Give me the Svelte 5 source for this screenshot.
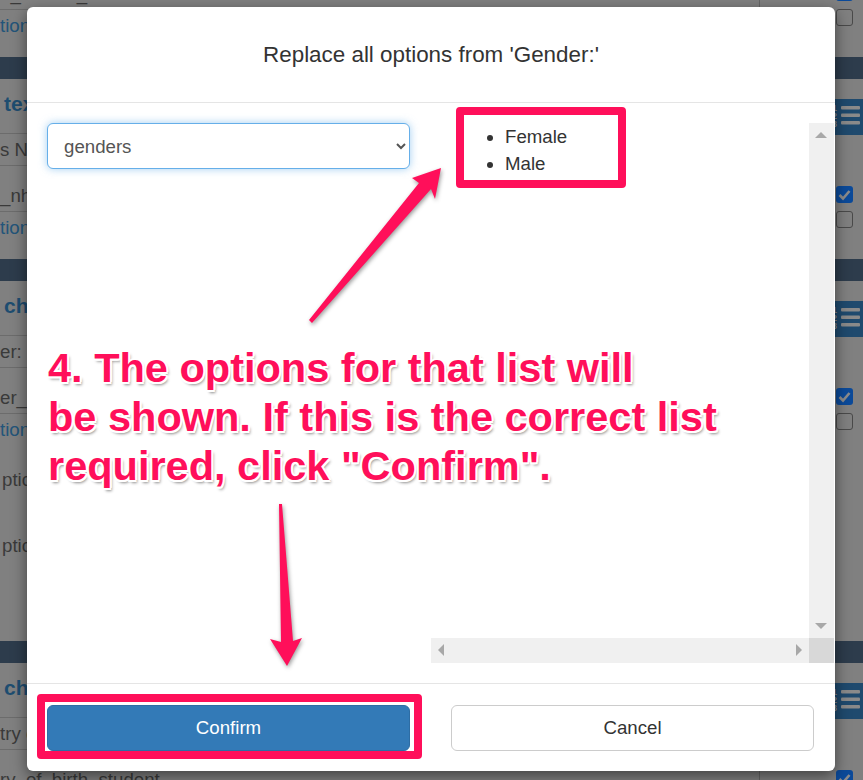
<script lang="ts">
	const sections = [
		{ title: '', label: '', input: 'e_names_student', link: 'tion', extra: [], height: 202 },
		{ title: 'tex', label: 's N', input: '_nh', link: 'tion', extra: [], height: 202 },
		{ title: 'ch', label: 'er:', input: 'er_s', link: 'tion', extra: ['ptic', 'ptic'], height: 382 },
		{ title: 'ch', label: 'try c', input: 'ry_of_birth_student', link: '', extra: [], height: 202 }
	];
	const options = ['Female', 'Male'];
	const note = ['4. The options for that list will', 'be shown. If this is the correct list', 'required, click "Confirm".'];
</script>

<div class="page">
	{#each sections as s}
		<section class="section" style="height: {s.height}px">
			<div class="band"></div>
			<div class="cols">
				<div class="fields">
					<div class="title">{s.title}</div>
					<div class="row">{s.label}</div>
					<div class="row input">{s.input}</div>
					<div class="link">{s.link}</div>
					{#each s.extra as e}
						<div class="extra">{e}</div>
					{/each}
				</div>
				<div class="tools">
					<div class="list-btn">
						<svg width="28" height="36" viewBox="0 0 28 36">
							<text x="-3" y="12" class="num">1</text>
							<text x="-3" y="20" class="num">2</text>
							<text x="-3" y="28" class="num">3</text>
							<rect x="6" y="7" width="19" height="3.4" rx="1" />
							<rect x="6" y="14.5" width="19" height="3.4" rx="1" />
							<rect x="6" y="22" width="19" height="3.4" rx="1" />
						</svg>
					</div>
					<div class="check on">
						<svg width="17" height="17" viewBox="0 0 17 17"><path d="M3.5 9l3.5 3.5 6.5-7.5" /></svg>
					</div>
					<div class="check"></div>
				</div>
			</div>
		</section>
	{/each}
</div>

<div class="modal">
	<header class="head">
		<h4>Replace all options from 'Gender:'</h4>
	</header>
	<div class="body">
		<select class="picker">
			<option>genders</option>
		</select>
		<div class="pane">
			<div class="pane-content">
				<ul>
					{#each options as o}
						<li>{o}</li>
					{/each}
				</ul>
			</div>
			<div class="track vtrack">
				<span class="arrow up"></span>
				<span class="arrow down"></span>
			</div>
			<div class="track htrack">
				<span class="arrow left"></span>
				<span class="arrow right"></span>
			</div>
			<div class="corner"></div>
		</div>
	</div>
	<footer class="foot">
		<button class="btn primary">Confirm</button>
		<button class="btn">Cancel</button>
	</footer>
</div>

<!-- annotations drawn over the screenshot -->
<div class="mark mark-list"></div>
<div class="mark mark-confirm"></div>
<svg class="arrows" width="863" height="780" viewBox="0 0 863 780">
	<polygon points="309,320 419,183 412,178 441,168 435,199 431,189 312,323" />
	<polygon points="279,504 282,504 293,641 302,638 287,666 270,639 281,642" />
</svg>
<div class="note">
	{#each note as line}
		<div>{line}</div>
	{/each}
</div>

<style>
	:global(body) {
		margin: 0;
		width: 863px;
		height: 780px;
		overflow: hidden;
		background: #808080;
		font-family: 'Liberation Sans', Arial, sans-serif;
	}

	.page {
		margin-top: -145px;
		color: #3a3a3a;
		font-size: 18.67px;
	}

	.section {
		overflow: hidden;
	}

	.band {
		height: 22px;
		background: #2d3c4c;
	}

	.cols {
		display: flex;
	}

	.fields {
		width: 760px;
		border-right: 1px solid #666;
		white-space: nowrap;
		box-sizing: border-box;
		height: 600px;
		margin-right: 75px;
	}

	.title {
		height: 55px;
		box-sizing: border-box;
		padding: 13px 0 0 4px;
		border-bottom: 1px solid #6c6c6c;
		font-size: 21px;
		font-weight: bold;
		color: #1e4d70;
	}

	.row {
		height: 31px;
		line-height: 31px;
		border-bottom: 1px solid #6c6c6c;
	}

	.input {
		margin-top: 14px;
	}

	.link {
		height: 44px;
		line-height: 31px;
		color: #23557a;
	}

	.extra {
		height: 66px;
		line-height: 31px;
		padding-left: 2px;
		position: relative;
		top: 6px;
	}

	.tools {
		width: 28px;
		display: flex;
		flex-direction: column;
	}

	.list-btn {
		height: 36px;
		margin-top: 20px;
		background: #1f4a6e;
		overflow: hidden;
	}

	.list-btn svg {
		display: block;
		fill: #8a8a8a;
	}

	.num {
		font-size: 9px;
		font-weight: bold;
		fill: #8a8a8a;
	}

	.check {
		width: 17px;
		height: 17px;
		margin: 8px 0 0 1px;
		box-sizing: border-box;
		border: 1.5px solid #4a4a4a;
		border-radius: 3px;
	}

	.check.on {
		margin-top: 51px;
		background: #0b4a9a;
		border: none;
	}

	.check svg {
		display: block;
		fill: none;
		stroke: #8c8c8c;
		stroke-width: 2.6;
	}

	.modal {
		position: absolute;
		left: 27px;
		top: 7px;
		width: 808px;
		height: 764px;
		display: flex;
		flex-direction: column;
		background: #fff;
		border-radius: 6px;
		box-shadow: 0 5px 15px rgba(0, 0, 0, 0.5);
		color: #333;
	}

	.head {
		height: 96px;
		box-sizing: border-box;
		border-bottom: 1px solid #e5e5e5;
		text-align: center;
	}

	h4 {
		margin: 0;
		padding-top: 34px;
		font-size: 22.4px;
		line-height: 28px;
		font-weight: normal;
	}

	.body {
		flex: 1;
		min-height: 0;
		display: grid;
		grid-template-columns: 363px 403px;
		column-gap: 21px;
		padding: 20px 1px 20px 20px;
	}

	.picker {
		height: 46px;
		padding: 6px 12px;
		font: inherit;
		font-size: 18.67px;
		color: #555;
		background-color: #fff;
		border: 1px solid #66afe9;
		border-radius: 6px;
		box-shadow: 0 0 8px rgba(102, 175, 233, 0.6);
		outline: none;
	}

	.pane {
		display: grid;
		grid-template-columns: 1fr 25px;
		grid-template-rows: 1fr 25px;
		min-height: 0;
	}

	.pane-content {
		min-width: 0;
	}

	ul {
		margin: 0;
		padding: 0 0 0 74px;
		font-size: 18.67px;
		line-height: 27px;
	}

	.track {
		position: relative;
		background: #f0f0f0;
	}

	.corner {
		background: #d8d8d8;
	}

	.arrow {
		position: absolute;
		width: 0;
		height: 0;
		border: 6px solid transparent;
	}

	.up {
		top: 0;
		left: 6px;
		border-top: 0;
		border-bottom-color: #a8a8a8;
		margin-top: 9px;
	}

	.down {
		bottom: 9px;
		left: 6px;
		border-bottom: 0;
		border-top-color: #a8a8a8;
	}

	.left {
		left: 7px;
		top: 6px;
		border-left: 0;
		border-right-color: #a8a8a8;
	}

	.right {
		right: 7px;
		top: 6px;
		border-right: 0;
		border-left-color: #a8a8a8;
	}

	.foot {
		height: 88px;
		box-sizing: border-box;
		border-top: 1px solid #e5e5e5;
		padding: 21px 21px 20px 20px;
		display: grid;
		grid-template-columns: 1fr 1fr;
		column-gap: 41px;
	}

	.btn {
		font: inherit;
		font-size: 18.67px;
		color: #333;
		background: #fff;
		border: 1px solid #ccc;
		border-radius: 6px;
		padding: 0;
	}

	.btn.primary {
		color: #fff;
		background: #337ab7;
		border-color: #2e6da4;
	}

	.mark {
		position: absolute;
		box-sizing: border-box;
		border: 8px solid #ff0f5a;
		border-radius: 4px;
	}

	.mark-list {
		left: 456px;
		top: 107px;
		width: 170px;
		height: 81px;
	}

	.mark-confirm {
		left: 37px;
		top: 694px;
		width: 385px;
		height: 65px;
	}

	.arrows {
		position: absolute;
		left: 0;
		top: 0;
		fill: #ff0f5a;
		filter: drop-shadow(1px 2px 2px rgba(0, 0, 0, 0.4));
		pointer-events: none;
	}

	.note {
		position: absolute;
		left: 48px;
		top: 343px;
		font-size: 41.5px;
		font-weight: bold;
		line-height: 49px;
		white-space: nowrap;
		color: #ff0f5a;
		text-shadow:
			-2px 0 0 #fff,
			2px 0 0 #fff,
			0 -2px 0 #fff,
			0 2px 0 #fff,
			-1.5px -1.5px 0 #fff,
			1.5px -1.5px 0 #fff,
			-1.5px 1.5px 0 #fff,
			1.5px 1.5px 0 #fff,
			2px 3px 3px rgba(0, 0, 0, 0.45);
	}
</style>
